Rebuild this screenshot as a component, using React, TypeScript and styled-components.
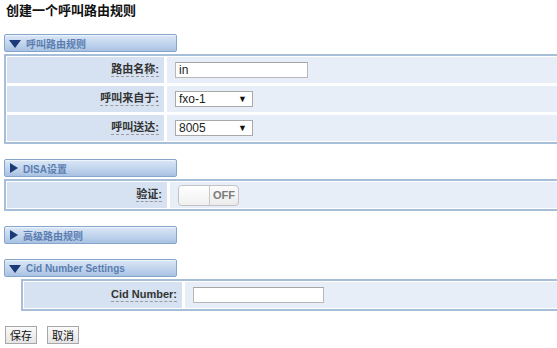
import { createGlobalStyle } from 'styled-components';
import styled from 'styled-components';

const GlobalStyle = createGlobalStyle`
  html, body {
    margin: 0;
    padding: 0;
    background: #ffffff;
    overflow: hidden;
  }
  body {
    font-family: 'Liberation Sans', 'Noto Sans CJK SC', sans-serif;
    color: #222;
  }
`;

const Page = styled.div`
  width: 557px;
  height: 348px;
  padding: 0 0 0 4px;
  box-sizing: border-box;
  overflow: hidden;
`;

const Title = styled.h1`
  margin: 0;
  padding: 2px 0 0 2px;
  height: 34px;
  box-sizing: border-box;
  font-size: 13px;
  line-height: 16px;
  font-weight: bold;
  font-family: 'Noto Sans CJK SC', sans-serif;
  color: #111;
`;

const Section = styled.section`
  margin-bottom: 15px;
`;

const Bar = styled.div`
  width: 173px;
  height: 18px;
  box-sizing: border-box;
  display: flex;
  align-items: center;
  gap: 5px;
  padding-left: 4px;
  border: 1px solid #86a5cc;
  border-radius: 2px;
  background: linear-gradient(#dbe7f6, #c3d6ee 50%, #a9c2e2);
  box-shadow: inset 0 1px 0 #eef4fb;
  margin-bottom: 2px;
`;

const BarTitle = styled.span`
  font-size: 10px;
  font-weight: bold;
  color: #5b7db0;
  font-family: 'Liberation Sans', 'Noto Sans CJK SC', sans-serif;
`;

const Arrow = styled.span<{ $open: boolean }>`
  display: inline-block;
  width: 0;
  height: 0;
  ${p =>
    p.$open
      ? `border-left: 6px solid transparent;
         border-right: 6px solid transparent;
         border-top: 8px solid #1d3a78;
         margin-top: 1px;`
      : `border-top: 5px solid transparent;
         border-bottom: 5px solid transparent;
         border-left: 8px solid #1d3a78;
         margin-left: 1px;`}
`;

const Table = styled.div<{ $indent?: number }>`
  margin-left: ${p => p.$indent ?? 0}px;
  width: 620px;
  border-top: 2px solid #a7bed8;
  border-bottom: 2px solid #a7bed8;
  border-left: 2px solid #a7bed8;
  padding: 1px 0 1px 1px;
  display: flex;
  flex-direction: column;
  gap: 3px;
`;

const Row = styled.div<{ $label: number }>`
  display: grid;
  grid-template-columns: ${p => p.$label}px 1fr;
  column-gap: 3px;
  height: 26px;
`;

const LabelCell = styled.div`
  background: #d6e2f1;
  display: flex;
  align-items: center;
  justify-content: flex-end;
  padding-right: 5px;
`;

const Label = styled.span`
  font-size: 11px;
  font-weight: bold;
  color: #333;
  border-bottom: 1px dashed #9a9a9a;
  line-height: 13px;
`;

const ValueCell = styled.div`
  background: #e7eef7;
  display: flex;
  align-items: center;
  padding-left: 8px;
`;

const TextInput = styled.div<{ $w: number }>`
  width: ${p => p.$w}px;
  height: 16px;
  box-sizing: border-box;
  border: 1px solid #b8b8b8;
  border-top-color: #a5a5a5;
  background: #fff;
  font-size: 12px;
  line-height: 14px;
  padding-left: 3px;
  color: #222;
`;

const SelectBox = styled.div`
  width: 78px;
  height: 16px;
  box-sizing: border-box;
  border: 1px solid #a9a9a9;
  background: #fff;
  display: flex;
  align-items: center;
  justify-content: space-between;
  padding: 0 5px 0 3px;
  font-size: 12px;
  color: #222;
`;

const SelectArrow = styled.span`
  font-size: 9px;
  color: #111;
`;

const Toggle = styled.div`
  width: 61px;
  height: 21px;
  box-sizing: border-box;
  border: 1px solid #c2c2c2;
  border-radius: 4px;
  background: linear-gradient(#fbfbfb, #ececec);
  display: flex;
  align-items: center;
  overflow: hidden;
`;

const Knob = styled.div`
  width: 30px;
  height: 100%;
  border-right: 1px solid #c8c8c8;
  background: linear-gradient(#ffffff, #f0f0f0);
  border-radius: 3px 0 0 3px;
`;

const ToggleText = styled.span`
  flex: 1;
  text-align: center;
  font-size: 11px;
  font-weight: bold;
  color: #7a7a7a;
`;

const Buttons = styled.div`
  display: flex;
  gap: 10px;
  margin-left: 1px;
`;

const Button = styled.button`
  height: 18px;
  padding: 0 4px;
  border: 1px solid #a8a8a8;
  background: linear-gradient(#fafafa, #e4e4e4);
  font-size: 11px;
  font-family: 'Noto Sans CJK SC', sans-serif;
  color: #111;
  line-height: 16px;
`;

export default function App() {
  return (
    <>
      <GlobalStyle />
      <Page>
        <Title>创建一个呼叫路由规则</Title>

        <Section>
          <Bar>
            <Arrow $open />
            <BarTitle>呼叫路由规则</BarTitle>
          </Bar>
          <Table>
            <Row $label={157}>
              <LabelCell>
                <Label>路由名称:</Label>
              </LabelCell>
              <ValueCell>
                <TextInput $w={133}>in</TextInput>
              </ValueCell>
            </Row>
            <Row $label={157}>
              <LabelCell>
                <Label>呼叫来自于:</Label>
              </LabelCell>
              <ValueCell>
                <SelectBox>
                  fxo-1
                  <SelectArrow>▼</SelectArrow>
                </SelectBox>
              </ValueCell>
            </Row>
            <Row $label={157}>
              <LabelCell>
                <Label>呼叫送达:</Label>
              </LabelCell>
              <ValueCell>
                <SelectBox>
                  8005
                  <SelectArrow>▼</SelectArrow>
                </SelectBox>
              </ValueCell>
            </Row>
          </Table>
        </Section>

        <Section>
          <Bar>
            <Arrow $open={false} />
            <BarTitle>DISA设置</BarTitle>
          </Bar>
          <Table>
            <Row $label={160}>
              <LabelCell>
                <Label>验证:</Label>
              </LabelCell>
              <ValueCell>
                <Toggle>
                  <Knob />
                  <ToggleText>OFF</ToggleText>
                </Toggle>
              </ValueCell>
            </Row>
          </Table>
        </Section>

        <Section>
          <Bar>
            <Arrow $open={false} />
            <BarTitle>高级路由规则</BarTitle>
          </Bar>
        </Section>

        <Section>
          <Bar>
            <Arrow $open />
            <BarTitle>Cid Number Settings</BarTitle>
          </Bar>
          <Table $indent={17}>
            <Row $label={158}>
              <LabelCell>
                <Label>Cid Number:</Label>
              </LabelCell>
              <ValueCell>
                <TextInput $w={131} />
              </ValueCell>
            </Row>
          </Table>
        </Section>

        <Buttons>
          <Button>保存</Button>
          <Button>取消</Button>
        </Buttons>
      </Page>
    </>
  );
}
